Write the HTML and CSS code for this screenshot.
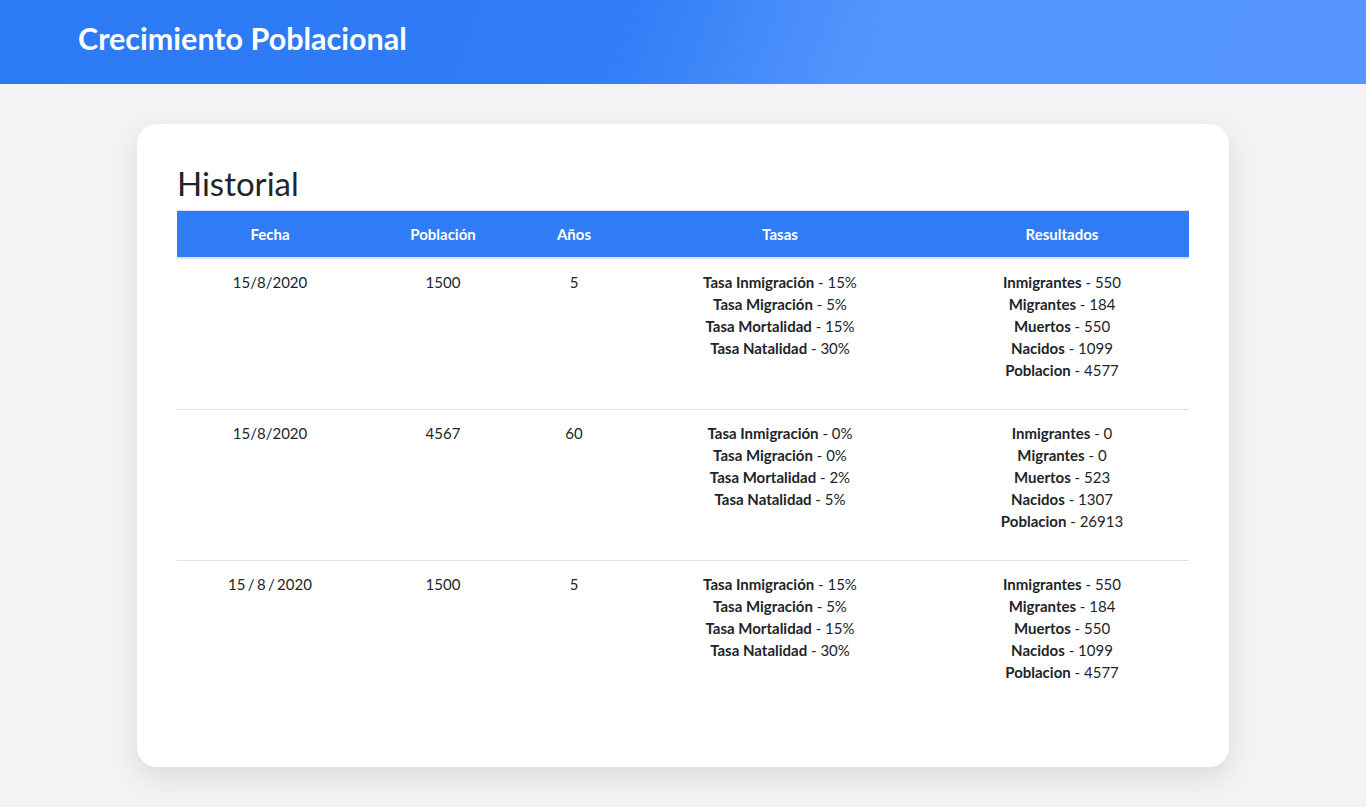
FILE: index.html
```html
<!DOCTYPE html>
<html lang="es">
<head>
<meta charset="utf-8">
<title>Crecimiento Poblacional</title>
<link rel="stylesheet" href="styles.css">
</head>
<body>
<header class="topbar">
  <h1 class="brand">Crecimiento Poblacional</h1>
</header>
<main class="page">
  <section class="card">
    <h2 class="card-title">Historial</h2>
    <table class="history">
      <thead>
        <tr>
          <th class="c-fecha">Fecha</th>
          <th class="c-pob">Población</th>
          <th class="c-anios">Años</th>
          <th class="c-tasas">Tasas</th>
          <th class="c-res">Resultados</th>
        </tr>
      </thead>
      <tbody>
        <tr>
          <td>15/8/2020</td>
          <td>1500</td>
          <td>5</td>
          <td><p class="list"><b>Tasa Inmigración</b> - 15%<br><b>Tasa Migración</b> - 5%<br><b>Tasa Mortalidad</b> - 15%<br><b>Tasa Natalidad</b> - 30%</p></td>
          <td><p class="list"><b>Inmigrantes</b> - 550<br><b>Migrantes</b> - 184<br><b>Muertos</b> - 550<br><b>Nacidos</b> - 1099<br><b>Poblacion</b> - 4577</p></td>
        </tr>
        <tr>
          <td>15/8/2020</td>
          <td>4567</td>
          <td>60</td>
          <td><p class="list"><b>Tasa Inmigración</b> - 0%<br><b>Tasa Migración</b> - 0%<br><b>Tasa Mortalidad</b> - 2%<br><b>Tasa Natalidad</b> - 5%</p></td>
          <td><p class="list"><b>Inmigrantes</b> - 0<br><b>Migrantes</b> - 0<br><b>Muertos</b> - 523<br><b>Nacidos</b> - 1307<br><b>Poblacion</b> - 26913</p></td>
        </tr>
        <tr>
          <td class="spaced-date">15 / 8 / 2020</td>
          <td>1500</td>
          <td>5</td>
          <td><p class="list"><b>Tasa Inmigración</b> - 15%<br><b>Tasa Migración</b> - 5%<br><b>Tasa Mortalidad</b> - 15%<br><b>Tasa Natalidad</b> - 30%</p></td>
          <td><p class="list"><b>Inmigrantes</b> - 550<br><b>Migrantes</b> - 184<br><b>Muertos</b> - 550<br><b>Nacidos</b> - 1099<br><b>Poblacion</b> - 4577</p></td>
        </tr>
      </tbody>
    </table>
  </section>
</main>
</body>
</html>
```
FILE: styles.css
```css
* { box-sizing: border-box; }
html, body { margin: 0; padding: 0; }
body {
  font-family: Lato, "Open Sans", Arial, sans-serif;
  background: #f3f2f5;
  color: #212529;
  font-size: 15px;
  line-height: 22px;
}
.topbar {
  height: 84px;
  background: linear-gradient(110deg, #2d7af5 0%, #2f7cf6 44%, #5596fd 64%, #5595fd 100%);
  display: flex;
  align-items: center;
  padding-left: 78px;
}
.brand {
  margin: 0;
  color: #fff;
  font-weight: 700;
  font-size: 30.5px;
  line-height: 36px;
  padding-bottom: 8px;
}
.page {
  padding: 40px 137px 40px;
}
.card {
  background: #fff;
  border-radius: 20px;
  box-shadow: 0 10px 28px rgba(0, 0, 0, 0.10);
  padding: 40px 40px 40px;
}
.card-title {
  margin: 0 0 8px;
  font-size: 33px;
  line-height: 38px;
  font-weight: 400;
  color: #212529;
}
.history {
  width: 100%;
  border-collapse: collapse;
  margin-bottom: 16px;
}
.history th {
  background: #2f7cf6;
  color: #fff;
  font-weight: 700;
  text-align: center;
  padding: 12px 12px 12px;
  border-top: 1px solid #dee2e6;
  border-bottom: 2px solid #dee2e6;
}
.history td {
  text-align: center;
  vertical-align: top;
  padding: 12px 12px;
  border-top: 1px solid #dee2e6;
}
.history tbody tr:first-child td { border-top: 0; }
.spaced-date { word-spacing: -1.5px; }
.c-fecha { width: 186px; }
.c-pob { width: 160px; }
.c-anios { width: 102px; }
.c-tasas { width: 310px; }
.c-res { width: 254px; }
.list { margin: 0 0 16px; }
.list b { font-weight: 700; }
```
